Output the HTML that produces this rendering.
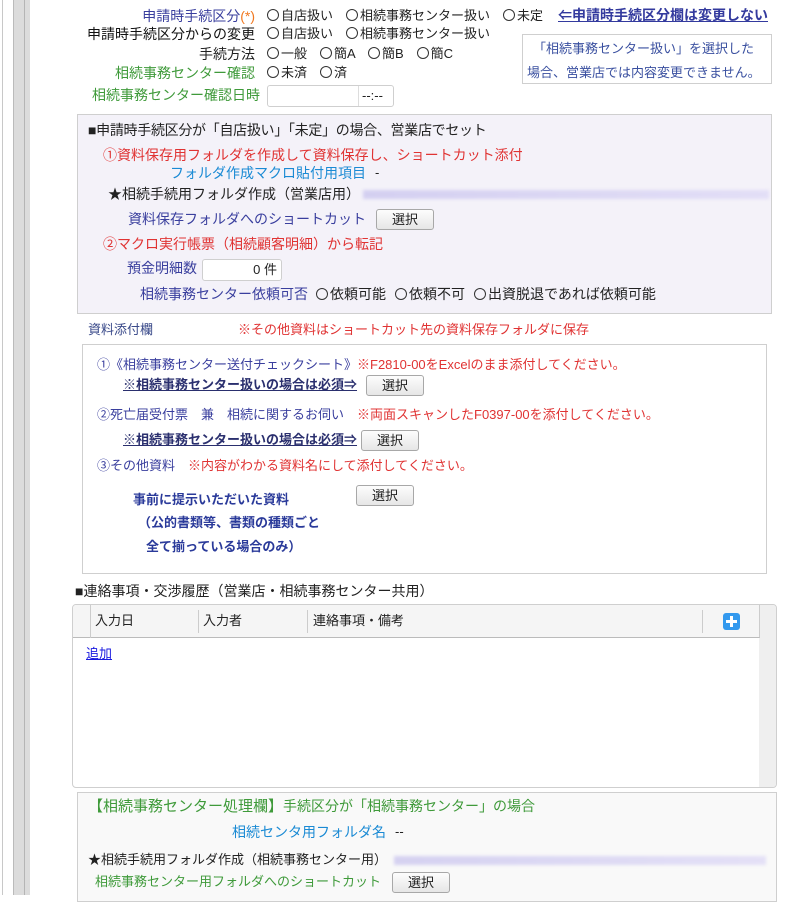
<!DOCTYPE html>
<html><head><meta charset="utf-8"><style>
*{margin:0;padding:0;box-sizing:border-box}
body{width:795px;height:895px;overflow:hidden;background:#fff;position:relative;font-family:"Liberation Sans","Noto Sans CJK JP",sans-serif;font-size:13px;color:#222}
.a{position:absolute;white-space:nowrap;line-height:16px}
.f{font-size:14px}
.blue{color:#3a3f9e}.green{color:#3f9a3a}.red{color:#e03333}.cy{color:#1a8ad4}
.r{display:inline-block;width:12px;height:12px;border:1px solid #333;border-radius:50%;vertical-align:-1px;margin-right:2px}
.btn{position:absolute;height:21px;width:58px;border:1px solid #a8a8a8;border-radius:3px;background:linear-gradient(#fdfdfd,#e6e6e6);font-size:13px;line-height:19px;text-align:center;color:#222}
.box{position:absolute;border:1px solid #cfcfcf}
.bu{font-weight:bold;text-decoration:underline;color:#2a2f6e}
.blur{position:absolute;height:9px;background:linear-gradient(90deg,#c9c4ee,#ddd8f6);filter:blur(1.5px);opacity:.75}
</style></head><body>
<div style="position:absolute;left:2px;top:0;width:1px;height:895px;background:#c8c8c8"></div>
<div style="position:absolute;left:13px;top:0;width:17px;height:895px;background:#dcdcdc;border-left:1px solid #bbb"></div>
<div style="position:absolute;left:24px;top:0;width:1px;height:895px;background:#b5b5b5"></div>

<div class="a blue f" style="right:540px;top:8px">申請時手続区分<span style="color:#f07820">(*)</span></div>
<div class="a" style="left:267px;top:8px"><span class="r"></span>自店扱い　<span class="r"></span>相続事務センター扱い　<span class="r"></span>未定</div>
<div class="a bu" style="left:558px;top:7px;font-size:14px;color:#333a9e">⇐申請時手続区分欄は変更しない</div>
<div class="a f" style="right:540px;top:26px;color:#111">申請時手続区分からの変更</div>
<div class="a" style="left:267px;top:26px"><span class="r"></span>自店扱い　<span class="r"></span>相続事務センター扱い</div>
<div class="a f" style="right:540px;top:46px">手続方法</div>
<div class="a" style="left:267px;top:46px"><span class="r"></span>一般　<span class="r"></span>簡A　<span class="r"></span>簡B　<span class="r"></span>簡C</div>
<div class="a green f" style="right:540px;top:65px">相続事務センター確認</div>
<div class="a" style="left:267px;top:65px"><span class="r"></span>未済　<span class="r"></span>済</div>
<div class="a green f" style="right:535px;top:87px">相続事務センター確認日時</div>
<div class="box" style="left:267px;top:85px;width:127px;height:22px;border-radius:3px;background:#fff"><div style="position:absolute;left:90px;top:0;width:1px;height:20px;background:#ddd"></div><span class="a" style="left:94px;top:2px">--:--</span></div>
<div class="box" style="left:522px;top:34px;width:250px;height:50px;color:#3a50a0"><div class="a" style="left:10px;top:6px">「相続事務センター扱い」を選択した</div><div class="a" style="left:4px;top:30px">場合、営業店では内容変更できません。</div></div>

<div class="box" style="left:77px;top:114px;width:695px;height:200px;background:#f4f2f9"></div>
<div class="a f" style="left:88px;top:122px;letter-spacing:-0.3px">■申請時手続区分が「自店扱い」「未定」の場合、営業店でセット</div>
<div class="a red f" style="left:103px;top:147px">①資料保存用フォルダを作成して資料保存し、ショートカット添付</div>
<div class="a cy f" style="right:429px;top:165px">フォルダ作成マクロ貼付用項目</div>
<div class="a" style="left:375px;top:165px">-</div>
<div class="a f" style="left:108px;top:186px">★相続手続用フォルダ作成（営業店用）</div>
<div class="blur" style="left:363px;top:190px;width:406px"></div>
<div class="a blue f" style="right:429px;top:211px">資料保存フォルダへのショートカット</div>
<div class="btn" style="left:376px;top:209px">選択</div>
<div class="a red f" style="left:103px;top:236px">②マクロ実行帳票（相続顧客明細）から転記</div>
<div class="a blue f" style="right:598px;top:260px">預金明細数</div>
<div class="box" style="left:202px;top:259px;width:80px;height:22px;border-radius:3px;background:#fff"><span class="a" style="right:4px;top:2px">0 件</span></div>
<div class="a blue f" style="right:487px;top:286px">相続事務センター依頼可否</div>
<div class="a f" style="left:316px;top:286px"><span class="r"></span>依頼可能</div>
<div class="a f" style="left:395px;top:286px"><span class="r"></span>依頼不可</div>
<div class="a f" style="left:474px;top:286px"><span class="r"></span>出資脱退であれば依頼可能</div>

<div class="a" style="left:88px;top:322px;color:#3a4a8a">資料添付欄</div>
<div class="a red" style="left:238px;top:322px">※その他資料はショートカット先の資料保存フォルダに保存</div>
<div class="box" style="left:82px;top:344px;width:685px;height:230px;background:#fff"></div>
<div class="a" style="left:97px;top:357px"><span class="blue">①《相続事務センター送付チェックシート》</span><span class="red">※F2810-00をExcelのまま添付してください。</span></div>
<div class="a bu" style="left:123px;top:377px">※相続事務センター扱いの場合は必須⇒</div>
<div class="btn" style="left:366px;top:375px">選択</div>
<div class="a" style="left:97px;top:407px"><span class="blue">②死亡届受付票　兼　相続に関するお伺い　</span><span class="red">※両面スキャンしたF0397-00を添付してください。</span></div>
<div class="a bu" style="left:123px;top:432px">※相続事務センター扱いの場合は必須⇒</div>
<div class="btn" style="left:361px;top:430px">選択</div>
<div class="a" style="left:97px;top:458px"><span class="blue">③その他資料　</span><span class="red">※内容がわかる資料名にして添付してください。</span></div>
<div class="btn" style="left:356px;top:485px">選択</div>
<div class="a" style="left:133px;top:492px;font-weight:bold;color:#2a3a9a">事前に提示いただいた資料</div>
<div class="a" style="left:138px;top:515px;font-weight:bold;color:#2a3a9a">（公的書類等、書類の種類ごと</div>
<div class="a" style="left:146px;top:539px;font-weight:bold;color:#2a3a9a">全て揃っている場合のみ）</div>

<div class="a" style="left:75px;top:583px;font-size:14px">■連絡事項・交渉履歴（営業店・相続事務センター共用）</div>
<div class="box" style="left:72px;top:604px;width:705px;height:184px;border-radius:4px;background:#fff;overflow:hidden">
<div style="position:absolute;right:0;top:0;width:17px;height:184px;background:#efefef"></div>
<div style="position:absolute;left:0;top:0;width:687px;height:33px;background:#f5f5f5;border-bottom:1px solid #bbb;border-right:1px solid #ccc"></div>
<div style="position:absolute;left:17px;top:0;width:1px;height:33px;background:#ccc"></div>
<div style="position:absolute;left:125px;top:5px;width:1px;height:23px;background:#ccc"></div>
<div style="position:absolute;left:234px;top:5px;width:1px;height:23px;background:#ccc"></div>
<div style="position:absolute;left:629px;top:5px;width:1px;height:23px;background:#ccc"></div>
<span class="a" style="left:22px;top:8px">入力日</span><span class="a" style="left:130px;top:8px">入力者</span><span class="a" style="left:240px;top:8px">連絡事項・備考</span>
<div style="position:absolute;left:650px;top:8px;width:17px;height:17px;background:#3399ee;border-radius:3px"><div style="position:absolute;left:7px;top:3px;width:3px;height:11px;background:#fff"></div><div style="position:absolute;left:3px;top:7px;width:11px;height:3px;background:#fff"></div></div>
<span class="a" style="left:13px;top:41px;color:#1a1ae0;text-decoration:underline">追加</span>
</div>

<div class="box" style="left:77px;top:792px;width:700px;height:110px;background:#f9f9f9"></div>
<div class="a green" style="left:88px;top:798px"><span style="font-size:15px">【相続事務センター処理欄】</span><span class="f">手続区分が「相続事務センター」の場合</span></div>
<div class="a cy f" style="left:232px;top:824px">相続センタ用フォルダ名</div>
<div class="a" style="left:395px;top:824px">--</div>
<div class="a" style="left:88px;top:852px">★相続手続用フォルダ作成（相続事務センター用）</div>
<div class="blur" style="left:394px;top:856px;width:372px"></div>
<div class="a green" style="left:95px;top:874px">相続事務センター用フォルダへのショートカット</div>
<div class="btn" style="left:392px;top:872px">選択</div>
</body></html>
